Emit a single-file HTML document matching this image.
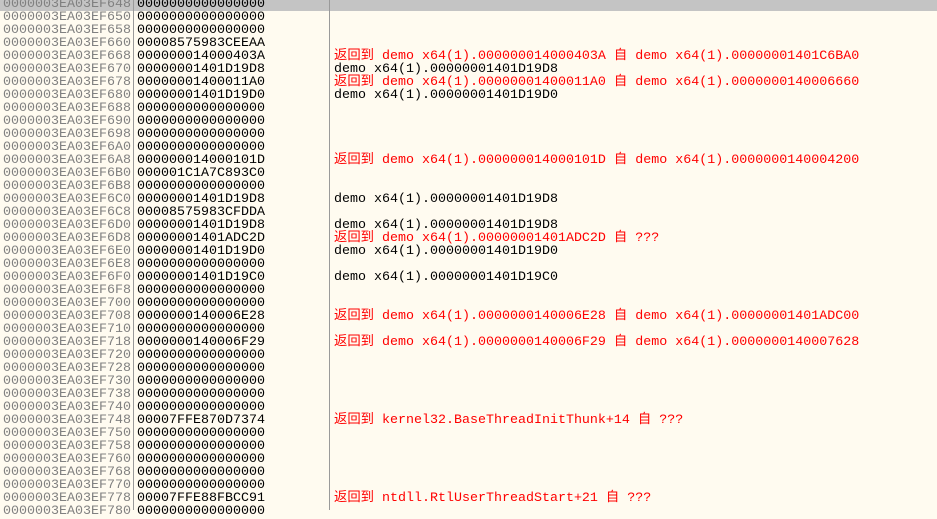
<!DOCTYPE html>
<html><head><meta charset="utf-8"><style>
body{margin:0;width:937px;height:510px;overflow:hidden;background:#fffbf0;position:relative;font-family:"Liberation Mono","Noto Sans CJK SC",monospace;font-size:13.33px;}
.r{position:absolute;left:0;width:937px;height:13px;line-height:13px;white-space:pre;}
.a{position:absolute;left:3px;color:#808080}
.v{position:absolute;left:137px;color:#000}
.c{position:absolute;left:334px;color:#000}
.c.red{color:#f00}
.hl{background:#c4c4c4}
.l1{position:absolute;left:133px;top:0;width:1px;height:510px;background:#9a9a9a}
.l2{position:absolute;left:329px;top:0;width:1px;height:510px;background:#9a9a9a}
</style></head><body>
<div id="rows"></div>
<div class="l1"></div><div class="l2"></div>
<script>
var d=[
["F648","0000000000000000"],["F650","0000000000000000"],["F658","0000000000000000"],["F660","00008575983CEEAA"],
["F668","000000014000403A","r","返回到 demo x64(1).000000014000403A 自 demo x64(1).00000001401C6BA0"],
["F670","00000001401D19D8","b","demo x64(1).00000001401D19D8"],
["F678","00000001400011A0","r","返回到 demo x64(1).00000001400011A0 自 demo x64(1).0000000140006660"],
["F680","00000001401D19D0","b","demo x64(1).00000001401D19D0"],
["F688","0000000000000000"],["F690","0000000000000000"],["F698","0000000000000000"],["F6A0","0000000000000000"],
["F6A8","000000014000101D","r","返回到 demo x64(1).000000014000101D 自 demo x64(1).0000000140004200"],
["F6B0","000001C1A7C893C0"],["F6B8","0000000000000000"],
["F6C0","00000001401D19D8","b","demo x64(1).00000001401D19D8"],
["F6C8","00008575983CFDDA"],
["F6D0","00000001401D19D8","b","demo x64(1).00000001401D19D8"],
["F6D8","00000001401ADC2D","r","返回到 demo x64(1).00000001401ADC2D 自 ???"],
["F6E0","00000001401D19D0","b","demo x64(1).00000001401D19D0"],
["F6E8","0000000000000000"],
["F6F0","00000001401D19C0","b","demo x64(1).00000001401D19C0"],
["F6F8","0000000000000000"],["F700","0000000000000000"],
["F708","0000000140006E28","r","返回到 demo x64(1).0000000140006E28 自 demo x64(1).00000001401ADC00"],
["F710","0000000000000000"],
["F718","0000000140006F29","r","返回到 demo x64(1).0000000140006F29 自 demo x64(1).0000000140007628"],
["F720","0000000000000000"],["F728","0000000000000000"],["F730","0000000000000000"],["F738","0000000000000000"],["F740","0000000000000000"],
["F748","00007FFE870D7374","r","返回到 kernel32.BaseThreadInitThunk+14 自 ???"],
["F750","0000000000000000"],["F758","0000000000000000"],["F760","0000000000000000"],["F768","0000000000000000"],["F770","0000000000000000"],
["F778","00007FFE88FBCC91","r","返回到 ntdll.RtlUserThreadStart+21 自 ???"],
["F780","0000000000000000"]];
var h="";
d.forEach(function(x,i){
h+='<div class="r'+(i==0?' hl':'')+'" style="top:'+(-2+13*i)+'px"><span class="a">0000003EA03E'+x[0]+'</span><span class="v">'+x[1]+'</span>'+(x[2]?'<span class="c'+(x[2]=="r"?' red':'')+'">'+x[3]+'</span>':'')+'</div>';
});
document.getElementById("rows").innerHTML=h;
</script>
</body></html>
